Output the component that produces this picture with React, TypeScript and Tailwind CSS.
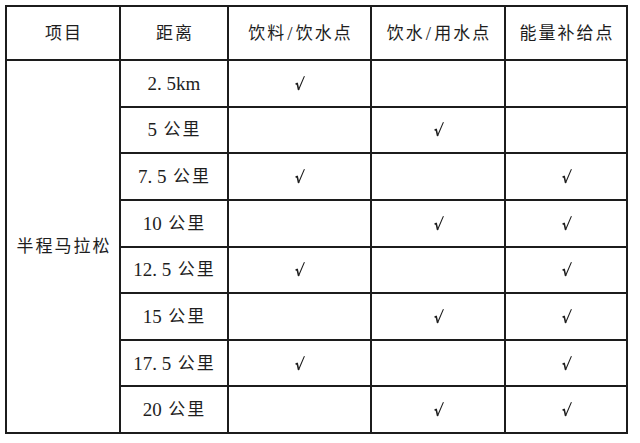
import React from "react";

type Row = { dist: string; drink: boolean; water: boolean; energy: boolean };

const rows: Row[] = [
  { dist: "2.5km", drink: true, water: false, energy: false },
  { dist: "5 公里", drink: false, water: true, energy: false },
  { dist: "7.5 公里", drink: true, water: false, energy: true },
  { dist: "10 公里", drink: false, water: true, energy: true },
  { dist: "12.5 公里", drink: true, water: false, energy: true },
  { dist: "15 公里", drink: false, water: true, energy: true },
  { dist: "17.5 公里", drink: true, water: false, energy: true },
  { dist: "20 公里", drink: false, water: true, energy: true },
];

const font = "[font-family:'Liberation_Serif','Noto_Sans_CJK_SC',serif]";

// song-style text: CJK chars spaced out, "." and "/" take half an em
function Txt({ s }: { s: string }) {
  return (
    <>
      {s.split("").map((c, i) => {
        if (c === "." || c === "/")
          return (
            <span key={i} className={`inline-block w-[0.5em] ${c === "/" ? "text-center" : "text-left"}`}>
              {c}
            </span>
          );
        if (c === " ") return <span key={i} className="inline-block w-[0.3em]" />;
        if (/[\u4e00-\u9fff]/.test(c))
          return (
            <span key={i} className="inline-block w-[19px] text-center text-[17px]">
              {c}
            </span>
          );
        return <React.Fragment key={i}>{c}</React.Fragment>;
      })}
    </>
  );
}

function Cell({ children, className = "" }: { children?: React.ReactNode; className?: string }) {
  return (
    <div className={`bg-white flex items-center justify-center whitespace-nowrap ${className}`}>
      {children}
    </div>
  );
}

function Check({ on }: { on: boolean }) {
  return (
    <Cell>
      {on && (
        <svg width="10" height="15" viewBox="0 0 10 15" className="ml-[1px]">
          <path d="M0.6 8.2 L2.2 7.4 L3.6 13.8" fill="none" stroke="#1e1e1e" strokeWidth="1.6" strokeLinejoin="round" />
          <path d="M3.6 13.8 L9.2 0.6" fill="none" stroke="#1e1e1e" strokeWidth="1.1" strokeLinecap="round" />
        </svg>
      )}
    </Cell>
  );
}

export default function App() {
  return (
    <div className="w-[640px] h-[443px] bg-white pt-[5px] pl-[5px]">
      <div
        className={`grid w-[623px] h-[429px] bg-[#1c1c1c] p-[2px] gap-[2px] grid-cols-[112px_106px_141px_132px_120px] grid-rows-[52px_repeat(8,minmax(0,1fr))] text-[19px] leading-none text-[#1e1e1e] ${font}`}
      >
        <Cell><Txt s="项目" /></Cell>
        <Cell><Txt s="距离" /></Cell>
        <Cell><Txt s="饮料/饮水点" /></Cell>
        <Cell><Txt s="饮水/用水点" /></Cell>
        <Cell><Txt s="能量补给点" /></Cell>

        <Cell className="row-span-8"><Txt s="半程马拉松" /></Cell>
        {rows.map((r, i) => (
          <React.Fragment key={i}>
            <Cell><Txt s={r.dist} /></Cell>
            <Check on={r.drink} />
            <Check on={r.water} />
            <Check on={r.energy} />
          </React.Fragment>
        ))}
      </div>
    </div>
  );
}
